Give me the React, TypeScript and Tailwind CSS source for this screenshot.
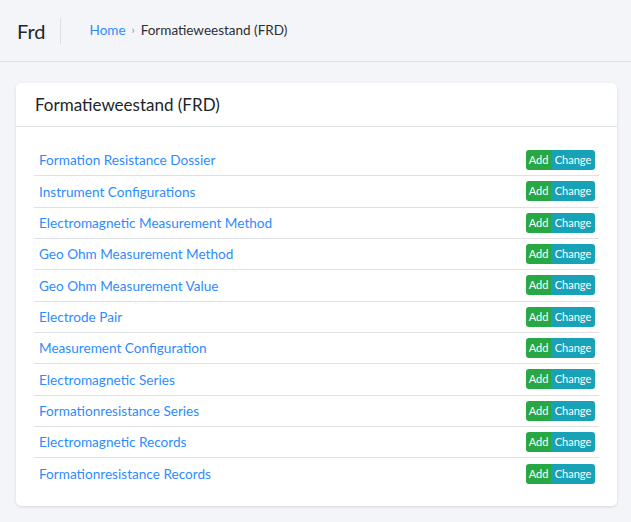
import React from "react";

const items = [
  "Formation Resistance Dossier",
  "Instrument Configurations",
  "Electromagnetic Measurement Method",
  "Geo Ohm Measurement Method",
  "Geo Ohm Measurement Value",
  "Electrode Pair",
  "Measurement Configuration",
  "Electromagnetic Series",
  "Formationresistance Series",
  "Electromagnetic Records",
  "Formationresistance Records",
];

export default function App() {
  return (
    <div
      className="min-h-[522px] bg-[#f4f5f9] text-[#212529]"
      style={{ fontFamily: "Lato, 'Open Sans', sans-serif" }}
    >
      <header className="h-[62px] border-b border-[#dee2e6] flex items-center">
        <div className="pl-[17px] pr-[14px] h-[26px] flex items-center border-r border-[#dcdfe3] text-[20px] leading-none">
          Frd
        </div>
        <nav className="ml-[29px] flex items-center text-[13.5px]">
          <a className="text-[#2e8bff]">Home</a>
          <span className="mx-[6px] text-[#8a9099] text-[11px]">›</span>
          <span className="text-[#2b2f33]">Formatieweestand (FRD)</span>
        </nav>
      </header>
      <main className="pt-[21px] px-[16px] pb-[16px]">
        <div className="w-[601px] bg-white rounded-[5px] shadow-[0_1px_3px_rgba(0,0,0,0.12)]">
          <div className="h-[44px] border-b border-[#dee2e6] flex items-center pl-[19px] text-[17px] text-[#212529]">
            Formatieweestand (FRD)
          </div>
          <div className="pt-[18px] pb-[16px] pl-[18px] pr-[18px]">
            {items.map((it, i) => (
              <div
                key={it}
                className={
                  "h-[31.33px] flex items-center justify-between pl-[5px] pr-[4px] " +
                  (i < items.length - 1 ? "border-b border-[#dee2e6]" : "")
                }
              >
                <a className="text-[13.6px] text-[#2e8bff] pt-[1px]">{it}</a>
                <div className="flex h-[20px] text-[11px] text-white rounded-[3px] overflow-hidden">
                  <span className="w-[25px] bg-[#28a745] flex items-center justify-center">Add</span>
                  <span className="w-[44px] bg-[#17a2b8] flex items-center justify-center">Change</span>
                </div>
              </div>
            ))}
          </div>
        </div>
      </main>
    </div>
  );
}
